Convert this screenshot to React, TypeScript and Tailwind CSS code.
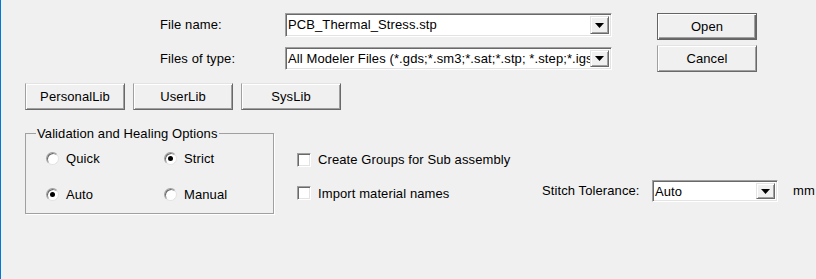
import React from "react";

function Arrow() {
  return (
    <svg width="9" height="5" viewBox="0 0 9 5" className="block">
      <path d="M0 0h9L4.5 5z" fill="#000" />
    </svg>
  );
}

function Combo({ value, className }: { value: string; className: string }) {
  return (
    <div
      className={`flex bg-white border border-t-[#a0a0a0] border-l-[#a0a0a0] border-b-white border-r-white shadow-[inset_1px_1px_0_#696969,inset_-1px_-1px_0_#e3e3e3] ${className}`}
    >
      <div className="flex-1 overflow-hidden whitespace-nowrap pl-[2px] pt-[2px] leading-[17px]">{value}</div>
      <div className="my-[2px] mr-[2px] flex w-[19px] items-center justify-center bg-[#f0f0f0] border border-t-[#e3e3e3] border-l-[#e3e3e3] border-b-[#696969] border-r-[#696969] shadow-[inset_1px_1px_0_white,inset_-1px_-1px_0_#a0a0a0]">
        <Arrow />
      </div>
    </div>
  );
}

function Btn({ label, w, isDefault }: { label: string; w: string; isDefault?: boolean }) {
  return (
    <button
      className={`h-[27px] ${w} bg-[#f0f0f0] text-center leading-[23px] border ${
        isDefault
          ? "border-[#646464] shadow-[inset_1px_1px_0_white,inset_-1px_-1px_0_#696969,inset_-2px_-2px_0_#a0a0a0]"
          : "border-t-[#e3e3e3] border-l-[#a0a0a0] border-b-[#696969] border-r-[#696969] shadow-[inset_1px_1px_0_white,inset_-1px_-1px_0_#a0a0a0]"
      }`}
    >
      {label}
    </button>
  );
}

function Radio({ label, checked }: { label: string; checked?: boolean }) {
  return (
    <div className="flex items-center gap-[7px]">
      <div className="flex h-[13px] w-[13px] items-center justify-center rounded-full bg-white border border-t-[#a0a0a0] border-l-[#a0a0a0] border-b-[#e3e3e3] border-r-[#e3e3e3] shadow-[inset_1px_1px_0_#696969]">
        {checked && <div className="h-[5px] w-[5px] rounded-full bg-black" />}
      </div>
      <span className="leading-[15px]">{label}</span>
    </div>
  );
}

function Check({ label }: { label: string }) {
  return (
    <div className="flex items-center gap-[7px]">
      <div className="h-[14px] w-[14px] bg-white border border-t-[#a0a0a0] border-l-[#a0a0a0] border-b-white border-r-white shadow-[inset_1px_1px_0_#696969,inset_-1px_-1px_0_#e3e3e3]" />
      <span className="leading-[15px]">{label}</span>
    </div>
  );
}

export default function App() {
  return (
    <div className="h-[279px] w-[816px] overflow-hidden border-l border-[#0078d7] bg-[#f0f0f0] text-[13px] tracking-[0.1px] text-black [font-family:'Liberation_Sans',Arial,sans-serif]">
      <div className="flex pt-[13px]">
        <div className="flex flex-col gap-[10px]">
          <div className="flex items-center">
            <span className="ml-[159px] w-[125px]">File name:</span>
            <Combo value="PCB_Thermal_Stress.stp" className="h-[24px] w-[327px]" />
          </div>
          <div className="flex items-center">
            <span className="ml-[159px] w-[125px]">Files of type:</span>
            <Combo
              value="All Modeler Files (*.gds;*.sm3;*.sat;*.stp; *.step;*.igs;*.iges)"
              className="h-[23px] w-[327px]"
            />
          </div>
        </div>
        <div className="ml-[45px] flex flex-col gap-[5px]">
          <Btn label="Open" w="w-[100px]" isDefault />
          <Btn label="Cancel" w="w-[100px]" />
        </div>
      </div>

      <div className="ml-[24px] mt-[11px] flex gap-[8px]">
        <Btn label="PersonalLib" w="w-[100px]" />
        <Btn label="UserLib" w="w-[100px]" />
        <Btn label="SysLib" w="w-[100px]" />
      </div>

      <div className="mt-[16px] flex items-start">
        <fieldset className="ml-[24px] h-[88px] w-[249px] border border-[#a0a0a0] px-[10px] shadow-[1px_1px_0_white]">
          <legend className="px-[1px] leading-[15px]">Validation and Healing Options</legend>
          <div className="mt-[10px] grid grid-cols-[118px_1fr] gap-y-[21px] pl-[10px]">
            <Radio label="Quick" />
            <Radio label="Strict" checked />
            <Radio label="Auto" checked />
            <Radio label="Manual" />
          </div>
        </fieldset>

        <div className="ml-[23px] mt-[26px] flex flex-1 flex-col gap-[17px]">
          <Check label="Create Groups for Sub assembly" />
          <div className="flex items-center">
            <div className="w-[245px]">
              <Check label="Import material names" />
            </div>
            <div className="-mt-[4px] flex items-center">
              <span className="w-[110px]">Stitch Tolerance:</span>
              <Combo value="Auto" className="h-[22px] w-[126px]" />
              <span className="ml-[15px]">mm</span>
            </div>
          </div>
        </div>
      </div>
    </div>
  );
}
